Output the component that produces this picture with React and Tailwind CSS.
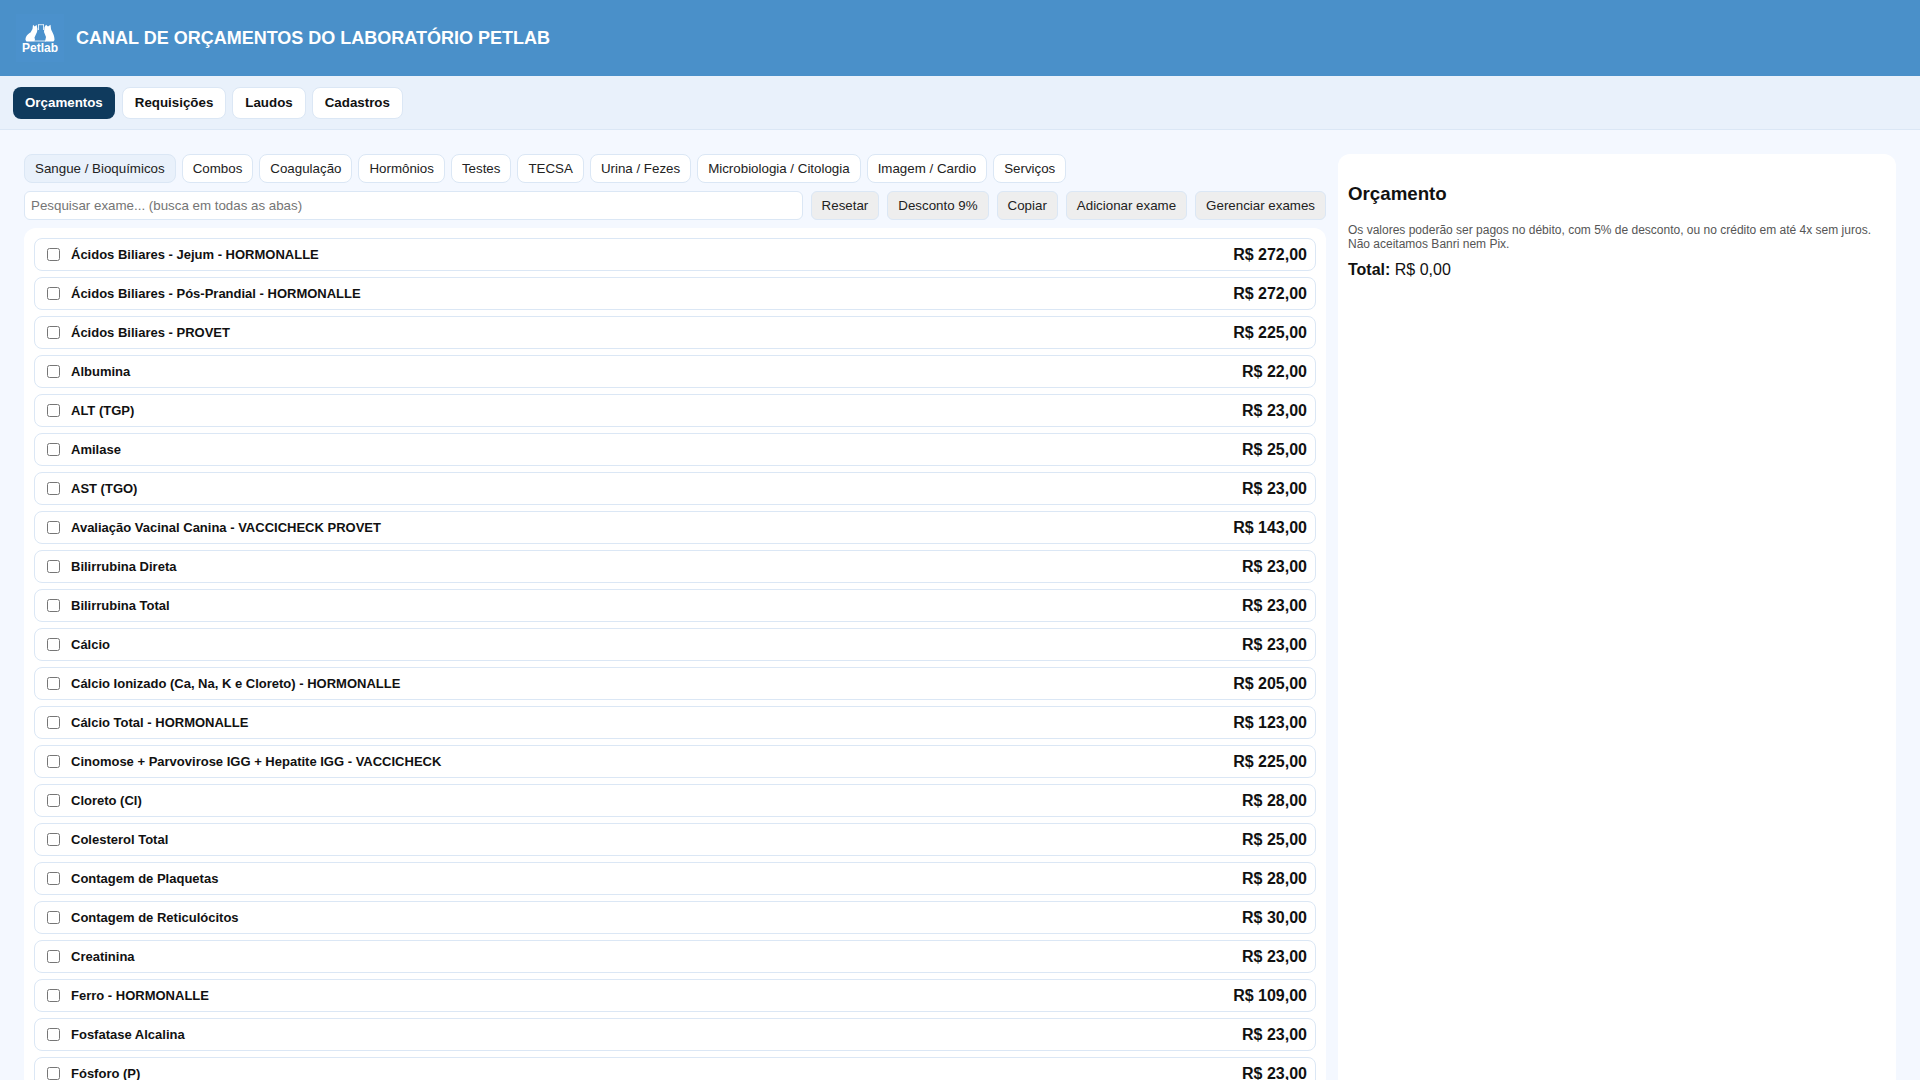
import React from 'react'

const topTabs = ['Orçamentos', 'Requisições', 'Laudos', 'Cadastros']
const examTabs = ['Sangue / Bioquímicos', 'Combos', 'Coagulação', 'Hormônios', 'Testes', 'TECSA', 'Urina / Fezes', 'Microbiologia / Citologia', 'Imagem / Cardio', 'Serviços']
const actions = ['Resetar', 'Desconto 9%', 'Copiar', 'Adicionar exame', 'Gerenciar exames']
const exams = [
  ['Ácidos Biliares - Jejum - HORMONALLE', 'R$ 272,00'],
  ['Ácidos Biliares - Pós-Prandial - HORMONALLE', 'R$ 272,00'],
  ['Ácidos Biliares - PROVET', 'R$ 225,00'],
  ['Albumina', 'R$ 22,00'],
  ['ALT (TGP)', 'R$ 23,00'],
  ['Amilase', 'R$ 25,00'],
  ['AST (TGO)', 'R$ 23,00'],
  ['Avaliação Vacinal Canina - VACCICHECK PROVET', 'R$ 143,00'],
  ['Bilirrubina Direta', 'R$ 23,00'],
  ['Bilirrubina Total', 'R$ 23,00'],
  ['Cálcio', 'R$ 23,00'],
  ['Cálcio Ionizado (Ca, Na, K e Cloreto) - HORMONALLE', 'R$ 205,00'],
  ['Cálcio Total - HORMONALLE', 'R$ 123,00'],
  ['Cinomose + Parvovirose IGG + Hepatite IGG - VACCICHECK', 'R$ 225,00'],
  ['Cloreto (Cl)', 'R$ 28,00'],
  ['Colesterol Total', 'R$ 25,00'],
  ['Contagem de Plaquetas', 'R$ 28,00'],
  ['Contagem de Reticulócitos', 'R$ 30,00'],
  ['Creatinina', 'R$ 23,00'],
  ['Ferro - HORMONALLE', 'R$ 109,00'],
  ['Fosfatase Alcalina', 'R$ 23,00'],
  ['Fósforo (P)', 'R$ 23,00'],
]

const Logo = () => (
  <div className="flex h-12 w-12 shrink-0 flex-col items-center justify-center bg-[#4b91cc] pt-[2px]">
    <svg width="30" height="18" viewBox="0 0 30 18" fill="white">
      {/* left cat */}
      <path d="M0.5 16C0.5 12 3 10 5.5 8.5L7.5 5 8 0.8 9.8 2.5 11.5 0.8 12.5 5 12 8 9.5 13.5 10 16 9 17.5H1.5Z" />
      {/* right cat */}
      <path d="M19.5 3L21 0.8 23 2.5 25.5 0.8 26 5C27 8 29.5 11 29.5 16L28.5 17.5H20L21 13 19 8Z" />
      {/* flask */}
      <path d="M13 0.7H19M13.5 0.7V6M18.5 0.7V6M9 17H21" fill="none" stroke="white" strokeWidth="0.8" />
    </svg>
    <span className="text-[12px] leading-[12px] font-bold text-white">Petlab</span>
  </div>
)

const App = () => {
  return (
    <div className="flex h-screen flex-col overflow-hidden bg-[#f4f8ff] font-['Liberation_Sans',Arial,sans-serif] text-[#111]">
      {/* Header */}
      <header className="flex h-[76px] shrink-0 items-center gap-3 bg-[#4a90c9] px-4">
        <Logo />
        <h1 className="text-[18px] font-bold text-white">CANAL DE ORÇAMENTOS DO LABORATÓRIO PETLAB</h1>
      </header>

      {/* Top tabs */}
      <nav className="flex h-[54px] shrink-0 items-center gap-[6px] border-b border-[#dbe7f5] bg-[#e9f1fb] px-[13px]">
        {topTabs.map((tab, i) => (
          <button
            key={tab}
            className={`h-[32px] rounded-lg px-3 text-[13.333px] font-bold ${i === 0 ? 'mr-[1px] bg-[#0f3a5d] text-white' : 'border border-[#dbe7f5] bg-white text-[#111]'}`}
          >
            {tab}
          </button>
        ))}
      </nav>

      {/* Main */}
      <main className="grid min-h-0 flex-1 grid-cols-[7fr_3fr] gap-3 px-6 pt-6">
        <section className="min-w-0">
          <div className="flex gap-[6px]">
            {examTabs.map((tab, i) => (
              <button
                key={tab}
                className={`h-[29px] rounded-lg border border-[#dbe7f5] px-[10px] text-[13.333px] text-[#222] ${i === 0 ? 'bg-[#e9f1fb]' : 'bg-white'}`}
              >
                {tab}
              </button>
            ))}
          </div>
          <div className="mt-2 flex gap-2">
            <input
              placeholder="Pesquisar exame... (busca em todas as abas)"
              className="h-[29px] min-w-0 flex-1 rounded-md border border-[#dbe7f5] bg-white px-[6px] text-[13.333px] placeholder:text-[#757575]"
            />
            {actions.map((a) => (
              <button key={a} className="h-[29px] rounded-md border border-[#dbe7f5] bg-[#eeeeee] px-[10px] text-[13.333px] text-[#222]">
                {a}
              </button>
            ))}
          </div>
          <div className="mt-2 flex flex-col gap-[6px] rounded-xl bg-white px-[10px] pt-[10px]">
            {exams.map(([name, price]) => (
              <label key={name} className="flex h-[33px] shrink-0 items-center justify-between rounded-lg border border-[#dbe7f5] bg-white px-2">
                <span className="flex items-center">
                  <input type="checkbox" className="mr-[11px] ml-1" />
                  <span className="text-[13px] font-bold">{name}</span>
                </span>
                <span className="text-[16px] font-bold">{price}</span>
              </label>
            ))}
          </div>
        </section>

        <aside className="min-w-0 rounded-xl bg-white px-[10px] pt-[29px]">
          <h2 className="text-[18.72px] leading-[21px] font-bold">Orçamento</h2>
          <p className="mt-[19px] text-[12px] leading-[14px] text-[#555]">
            Os valores poderão ser pagos no débito, com 5% de desconto, ou no crédito em até 4x sem juros.
            <br />
            Não aceitamos Banri nem Pix.
          </p>
          <div className="mt-[7px] text-[16px]">
            <strong>Total:</strong> R$ 0,00
          </div>
        </aside>
      </main>
    </div>
  )
}

export default App
